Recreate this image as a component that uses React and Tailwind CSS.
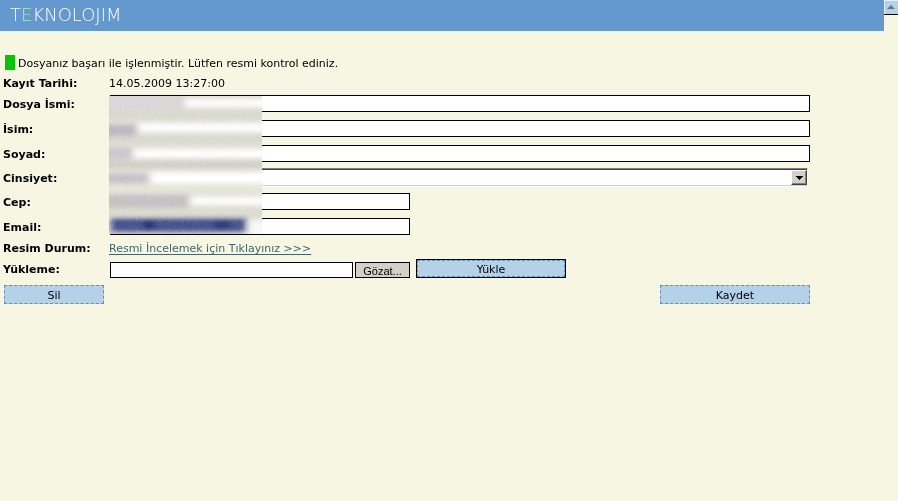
import React from "react";

const field = "block h-[17px] border border-black bg-white px-1 text-[11px] outline-none";
const action =
  "h-[19px] border border-dashed border-[#6390b0] bg-[#b3d1e8] pt-[2px] text-center text-[11px] leading-[15px]";

function Row({ label, htmlFor, height = "h-[25px]", children }) {
  return (
    <div className={`flex items-center ${height}`}>
      {htmlFor ? (
        <label htmlFor={htmlFor} className="w-[107px] shrink-0 pt-[2px] font-bold">{label}</label>
      ) : (
        <span className="w-[107px] shrink-0 pt-[2px] font-bold">{label}</span>
      )}
      {children}
    </div>
  );
}

function Redaction() {
  return (
    <svg
      className="block"
      width="153"
      height="138"
      viewBox="0 0 153 138"
      aria-hidden="true"
    >
      <defs>
        <filter id="soft" x="-10%" y="-10%" width="120%" height="120%">
          <feGaussianBlur stdDeviation="3 2.4" />
        </filter>
        <filter id="grain" x="0" y="0" width="100%" height="100%" colorInterpolationFilters="sRGB">
          <feTurbulence type="fractalNoise" baseFrequency="0.37" numOctaves="3" seed="7" />
          <feColorMatrix values="0.8 0.4 0 0 -0.1  0.4 0.8 0 0 -0.1  0.4 0 0.8 0 -0.1  0 0 0 0 1" />
        </filter>
      </defs>
      <rect width="153" height="138" fill="#e0dfd6" />
      <g filter="url(#soft)">
        <rect x="-8" y="-8" width="84" height="22" fill="#dad8d8" />
        <rect x="76" y="3" width="90" height="8" fill="#ffffff" />
        <rect x="-8" y="15" width="170" height="8" fill="#d9d8cd" />
        <rect x="30" y="27" width="136" height="9" fill="#ffffff" />
        <rect x="-8" y="29" width="35" height="11" fill="#bbb9c2" />
        <rect x="-8" y="40" width="170" height="7" fill="#d9d8cd" />
        <rect x="25" y="53" width="140" height="9" fill="#ffffff" />
        <rect x="-8" y="52" width="31" height="11" fill="#c9c7ce" />
        <rect x="-8" y="65" width="170" height="7" fill="#cfcec5" />
        <rect x="42" y="76" width="124" height="12" fill="#ffffff" />
        <rect x="-8" y="78" width="46" height="9" fill="#c3c1c9" />
        <rect x="-8" y="90" width="170" height="8" fill="#e8e6d9" />
        <rect x="82" y="101" width="84" height="8" fill="#ffffff" />
        <rect x="-8" y="98" width="87" height="14" fill="#c5c3c5" />
        <rect x="-8" y="113" width="170" height="7" fill="#dddccf" />
        <rect x="138" y="124" width="28" height="18" fill="#f8f8f8" />
        <rect x="2" y="122" width="136" height="14" fill="#46558f" />
        <rect x="35" y="125" width="10" height="8" fill="#1d2c70" />
        <rect x="105" y="125" width="16" height="8" fill="#2c3a7c" />
      </g>
      <rect width="153" height="138" filter="url(#grain)" opacity="0.16" className="mix-blend-overlay" />
    </svg>
  );
}

export default function App() {
  return (
    <div className="flex min-h-screen bg-[#f7f6e2] font-['Verdana','DejaVu_Sans',sans-serif] text-[11px] leading-4 text-black">
      <div className="min-w-0 flex-1">
        <header className="flex h-[31px] items-center bg-[#6399cf] pb-[2px] pl-[10px]">
          <h1 className="font-['DejaVu_Sans_Light','DejaVu_Sans',sans-serif] text-[18px] leading-5 text-white">
            T<span className="text-[#b5eda0]">E</span>KNOLOJIM
          </h1>
        </header>

        <main className="max-w-[810px] pl-[3px] pt-6">
          <p className="flex h-4 items-start gap-[3px] pl-[2px]">
            <span className="h-[15px] w-[10px] bg-[#00c800]" />
            <span className="pt-px">Dosyanız başarı ile işlenmiştir. Lütfen resmi kontrol ediniz.</span>
          </p>

          <form className="mt-1" onSubmit={(e) => e.preventDefault()}>
            <Row label="Kayıt Tarihi:" height="h-4">
              <span className="-ml-px pt-[2px]">14.05.2009 13:27:00</span>
            </Row>

            <div className="relative">
              <Row label="Dosya İsmi:" htmlFor="dosya">
                <input id="dosya" className={`${field} min-w-0 flex-1`} />
              </Row>
              <Row label="İsim:" htmlFor="isim">
                <input id="isim" className={`${field} min-w-0 flex-1`} />
              </Row>
              <Row label="Soyad:" htmlFor="soyad">
                <input id="soyad" className={`${field} min-w-0 flex-1`} />
              </Row>
              <Row label="Cinsiyet:" htmlFor="cinsiyet" height="h-[23px]">
                <div className="relative mr-[2px] min-w-0 flex-1">
                  <select
                    id="cinsiyet"
                    className="block h-[19px] w-full appearance-none border border-b-white border-l-[#808080] border-r-white border-t-[#808080] bg-white text-[11px] shadow-[inset_0_1px_0_#404040,inset_0_-1px_0_#d4d0c8] outline-none"
                  >
                    <option></option>
                  </select>
                  <span className="pointer-events-none absolute right-[1px] top-[2px] flex h-[15px] w-4 items-center justify-center border border-b-[#404040] border-l-white border-r-[#404040] border-t-white bg-[#d4d0c8] shadow-[inset_-1px_-1px_0_#808080]">
                    <svg width="8" height="4" viewBox="0 0 8 4" shapeRendering="crispEdges" aria-hidden="true">
                      <path d="M0 0h8L4 4z" fill="#000" />
                    </svg>
                  </span>
                </div>
              </Row>
              <Row label="Cep:" htmlFor="cep">
                <input id="cep" className={`${field} w-[300px]`} />
              </Row>
              <Row label="Email:" htmlFor="email">
                <input id="email" className={`${field} w-[300px]`} />
              </Row>
              <div className="pointer-events-none absolute left-[106px] top-[5px]">
                <Redaction />
              </div>
            </div>

            <div className="mt-px">
              <Row label="Resim Durum:" height="h-4">
                <a href="#resim" className="-ml-px pt-[2px] text-[#40656b] underline underline-offset-2">
                  Resmi İncelemek için Tıklayınız &gt;&gt;&gt;
                </a>
              </Row>
            </div>

            <div className="mt-[3px]">
              <Row label="Yükleme:" htmlFor="yukleme" height="h-[19px]">
                <div className="flex items-end">
                  <input
                    id="yukleme"
                    className="block h-4 w-[243px] border border-black bg-white px-1 text-[11px] outline-none"
                  />
                  <button
                    type="button"
                    className="ml-[2px] h-4 w-[55px] border border-black bg-[#d4d0c8] pt-[2px] font-['Liberation_Sans',sans-serif] text-[11px] leading-3"
                  >
                    Gözat...
                  </button>
                  <button
                    type="submit"
                    className="ml-[6px] h-[19px] w-[150px] border border-black bg-white"
                  >
                    <span className="block h-[17px] border border-dashed border-[#6390b0] bg-[#b3d1e8] pt-px text-[11px] leading-[15px]">
                      Yükle
                    </span>
                  </button>
                </div>
              </Row>
            </div>

            <div className="mt-[7px] flex justify-between pl-px">
              <button type="button" className={`${action} w-[100px]`}>Sil</button>
              <button type="button" className={`${action} w-[150px]`}>Kaydet</button>
            </div>
          </form>
        </main>
      </div>

      <div className="w-[14px] shrink-0">
        <button
          type="button"
          aria-label="Yukarı kaydır"
          className="flex h-[15px] w-full items-center justify-center border-b border-black bg-[#b3d1e8] shadow-[inset_1px_1px_0_#e0eefa]"
        >
          <svg width="8" height="4" viewBox="0 0 8 4" aria-hidden="true">
            <path d="M0 4h8L4 0z" fill="#68747f" />
          </svg>
        </button>
      </div>
    </div>
  );
}
